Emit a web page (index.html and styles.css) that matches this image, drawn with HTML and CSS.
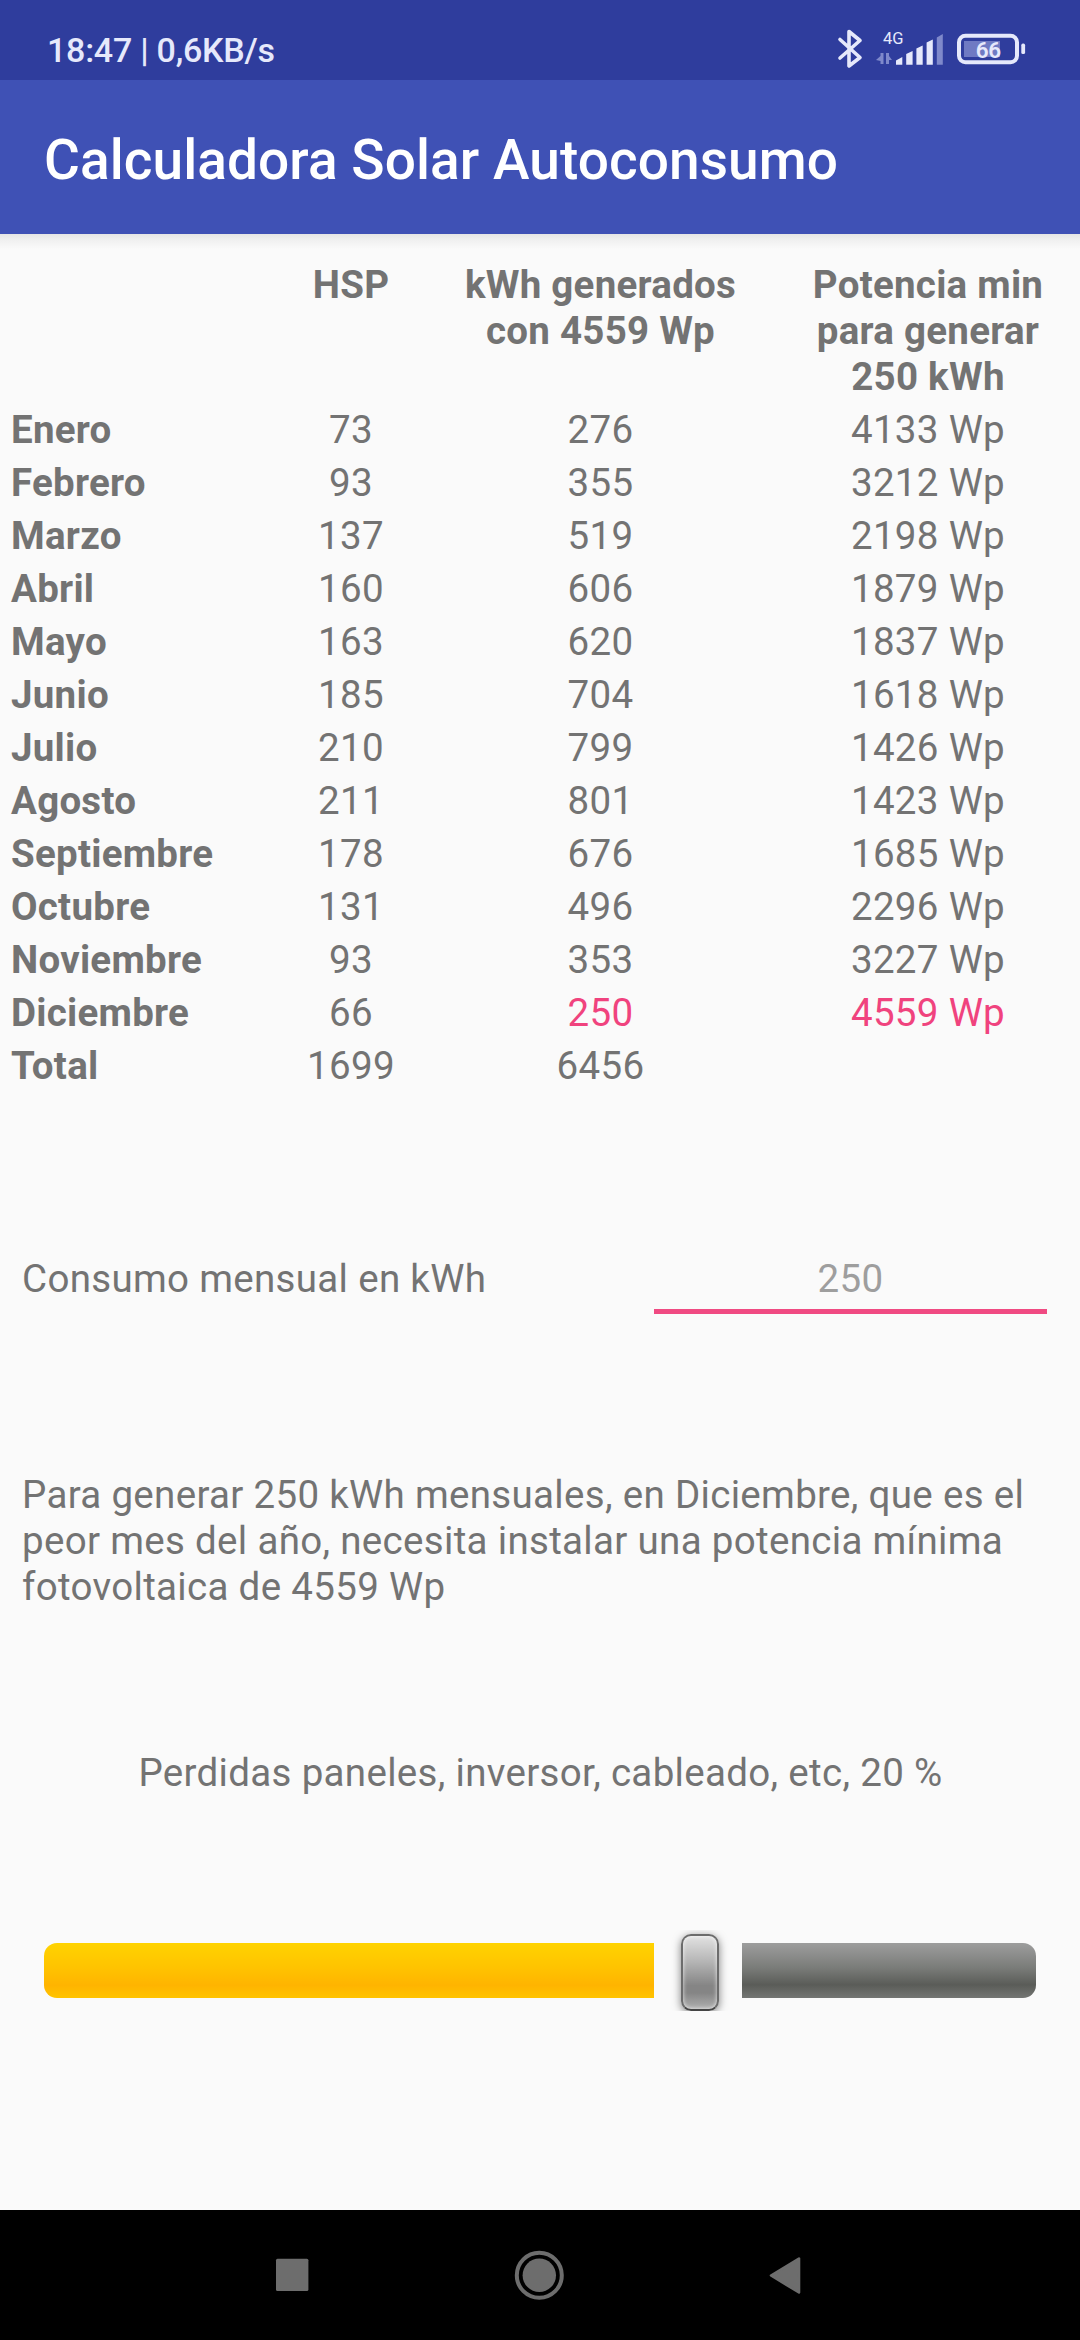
FILE: index.html
```html
<!DOCTYPE html>
<html lang="es">
<head>
    <meta charset="UTF-8">
    <meta name="viewport" content="width=device-width, initial-scale=1.0">
    <title>Calculadora Solar Autoconsumo</title>
    <link rel="stylesheet" href="styles.css">
</head>
<body>
    <div class="status-bar">
        <span class="status-text">18:47 | 0,6KB/s</span>
        <svg class="status-icons" width="200" height="50" viewBox="832 24 200 50">
            <!-- bluetooth -->
            <path d="M840 39.5 L860 57.5 L849 66 V31.5 L860 40.5 L840 58" fill="none" stroke="#e6e9fb" stroke-width="3.6" stroke-linecap="round" stroke-linejoin="round"/>
            <!-- signal -->
            <text x="883" y="44" class="net">4G</text>
            <path d="M883.5 53 V64 H880.5 V61 L876 60 L880.5 56 V53 Z M886 53 H889 V56 L892 60 H889 V64 H886 Z" fill="#7f89cb"/>
            <g fill="#e6e9fb">
                <path d="M896 60.5 L902.3 57 V64.8 H896 Z"/>
                <path d="M906.2 54 L912.6 51 V64.8 H906.2 Z"/>
                <path d="M916.4 48.5 L922.7 45.5 V64.8 H916.4 Z"/>
                <path d="M926.6 42.5 L932.8 39.5 V64.8 H926.6 Z"/>
            </g>
            <path d="M936.8 37.5 L942.8 34 V64.8 H936.8 Z" fill="#7f89cb"/>
            <!-- battery -->
            <rect x="964" y="41" width="36" height="16" fill="#6f7ac3"/>
            <rect x="959" y="35.7" width="58" height="26.6" rx="6.5" fill="none" stroke="#e6e9fb" stroke-width="4"/>
            <rect x="1021.3" y="43.6" width="3.8" height="10.4" rx="1.6" fill="#e6e9fb"/>
            <text x="988.3" y="57.7" class="level">66</text>
        </svg>
    </div>

    <div class="app-bar">
        <h1>Calculadora Solar Autoconsumo</h1>
    </div>

    <div class="content">
        <div class="months">
            <div class="row head">
                <b></b>
                <b>HSP</b>
                <b>kWh generados<br>con 4559 Wp</b>
                <b>Potencia min<br>para generar<br>250 kWh</b>
            </div>
            <div class="row"><b>Enero</b><span>73</span><span>276</span><span>4133 Wp</span></div>
            <div class="row"><b>Febrero</b><span>93</span><span>355</span><span>3212 Wp</span></div>
            <div class="row"><b>Marzo</b><span>137</span><span>519</span><span>2198 Wp</span></div>
            <div class="row"><b>Abril</b><span>160</span><span>606</span><span>1879 Wp</span></div>
            <div class="row"><b>Mayo</b><span>163</span><span>620</span><span>1837 Wp</span></div>
            <div class="row"><b>Junio</b><span>185</span><span>704</span><span>1618 Wp</span></div>
            <div class="row"><b>Julio</b><span>210</span><span>799</span><span>1426 Wp</span></div>
            <div class="row"><b>Agosto</b><span>211</span><span>801</span><span>1423 Wp</span></div>
            <div class="row"><b>Septiembre</b><span>178</span><span>676</span><span>1685 Wp</span></div>
            <div class="row"><b>Octubre</b><span>131</span><span>496</span><span>2296 Wp</span></div>
            <div class="row"><b>Noviembre</b><span>93</span><span>353</span><span>3227 Wp</span></div>
            <div class="row"><b>Diciembre</b><span>66</span><span class="worst">250</span><span class="worst">4559 Wp</span></div>
            <div class="row"><b>Total</b><span>1699</span><span>6456</span><span></span></div>
        </div>

        <div class="consumption">
            <span>Consumo mensual en kWh</span>
            <div class="field">250</div>
        </div>

        <p class="summary">Para generar 250 kWh mensuales, en Diciembre, que es el<br>peor mes del año, necesita instalar una potencia mínima<br>fotovoltaica de 4559 Wp</p>

        <p class="losses">Perdidas paneles, inversor, cableado, etc, 20 %</p>

        <div class="slider">
            <div class="track filled"></div>
            <div class="thumb-box"><div class="thumb"></div></div>
            <div class="track empty"></div>
        </div>
    </div>

    <div class="nav-bar">
        <svg width="34" height="50" viewBox="0 0 34 50"><rect x="1" y="8.7" width="32.4" height="32.4" rx="1.5" fill="#6d6d6d"/></svg>
        <svg width="50" height="50" viewBox="0 0 50 50">
            <circle cx="25.3" cy="25.3" r="22.5" fill="none" stroke="#6d6d6d" stroke-width="4"/>
            <circle cx="25.3" cy="25.3" r="16.7" fill="#6d6d6d"/>
        </svg>
        <svg width="34" height="50" viewBox="0 0 34 50"><path d="M3 25.5 L31 8.5 V42.5 Z" fill="#6d6d6d" stroke="#6d6d6d" stroke-width="2.6" stroke-linejoin="round"/></svg>
    </div>
</body>
</html>
```
FILE: styles.css
```css
* {
    margin: 0;
    padding: 0;
    box-sizing: border-box;
}

body {
    width: 1080px;
    height: 2340px;
    display: flex;
    flex-direction: column;
    background: #fafafa;
    color: #737373;
    font-family: Roboto, sans-serif;
    font-size: 38.5px;
    line-height: 46px;
    letter-spacing: 0.32px;
    overflow: hidden;
}

.status-bar {
    height: 80px;
    padding: 24px 48px 0 47px;
    display: flex;
    justify-content: space-between;
    background: #2f3d9d;
    letter-spacing: 0;
}

.status-text {
    color: #e6e9fb;
    font-size: 34px;
    font-weight: 500;
    line-height: 52px;
    letter-spacing: -0.25px;
}

.net {
    fill: #e6e9fb;
    font-size: 16.5px;
}

.level {
    fill: #e6e9fb;
    font-size: 22.5px;
    font-weight: 600;
    letter-spacing: -0.4px;
    text-anchor: middle;
}

.app-bar {
    height: 154px;
    padding-left: 44px;
    display: flex;
    align-items: center;
    background: #3f51b5;
}

.app-bar h1 {
    padding-top: 6px;
    color: #fff;
    font-size: 55px;
    font-weight: 500;
    line-height: 64px;
    letter-spacing: 0.07px;
}

.content {
    flex: 1;
    padding-top: 28px;
    background: linear-gradient(#e5e5e5, #f0f0f0 6px, #fafafa 15px);
}

.row {
    display: grid;
    grid-template-columns: 266px 148px 351px 304px;
    min-height: 53px;
    padding: 0 0 7px 11px;
    text-align: center;
}

.row b {
    font-weight: 700;
    letter-spacing: 0.26px;
}

.row b:first-child {
    text-align: left;
}

.worst {
    color: #f0437e;
}

.consumption {
    margin-top: 160px;
    padding: 0 33px 0 22px;
    display: flex;
    justify-content: space-between;
}

.field {
    width: 393px;
    height: 58px;
    border-bottom: 5px solid #f04a82;
    color: #9e9e9e;
    text-align: center;
}

.summary {
    margin-top: 158px;
    padding-left: 22px;
    white-space: nowrap;
}

.losses {
    margin-top: 140px;
    padding-left: 1px;
    text-align: center;
}

.slider {
    margin: 134px 44px 0;
    height: 81px;
    display: flex;
    align-items: center;
}

.track {
    height: 55px;
}

.filled {
    width: 610px;
    border-radius: 13px 0 0 13px;
    background: linear-gradient(#ffd300, #ffc300 45%, #ffb400 77%, #ffc400);
}

.empty {
    width: 294px;
    border-radius: 0 13px 13px 0;
    background: linear-gradient(#9d9d9d, #7a7c79 45%, #5a5c58 76%, #747673);
}

.thumb-box {
    width: 88px;
    height: 81px;
    padding: 4px 0 0 27px;
    overflow: hidden;
}

.thumb {
    width: 38px;
    height: 77px;
    border: 2px solid #6c6c6c;
    border-bottom-color: #444;
    border-radius: 10px;
    background: linear-gradient(#e2e2e2, #b5b5b5 35%, #858585 68%, #858585 78%, #b0b0b0);
    box-shadow: 0 2px 9px rgba(0, 0, 0, 0.5), inset 0 0 4px rgba(255, 255, 255, 0.8);
}

.nav-bar {
    height: 130px;
    padding: 40px 278px 0 275px;
    display: flex;
    justify-content: space-between;
    background: #000;
}
```
